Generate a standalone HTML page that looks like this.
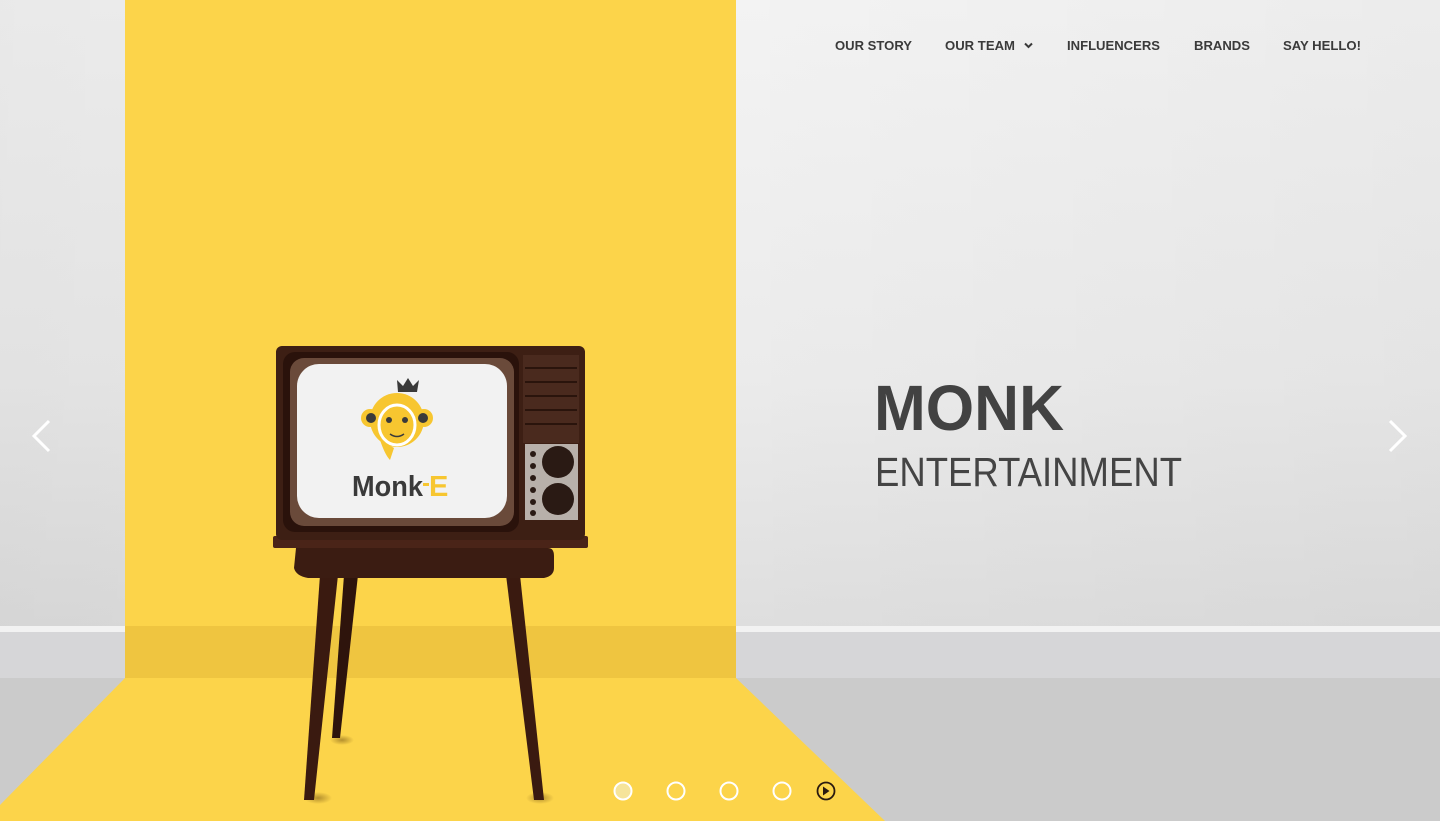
<!DOCTYPE html>
<html><head><meta charset="utf-8"><style>
html,body{margin:0;padding:0;width:1440px;height:821px;overflow:hidden;background:#eee}
svg{display:block}
</style></head><body>
<svg width="1440" height="821" viewBox="0 0 1440 821" xmlns="http://www.w3.org/2000/svg">
<defs>
<linearGradient id="wall" x1="0" y1="0" x2="0" y2="1">
<stop offset="0" stop-color="#f3f3f3"/><stop offset="0.6" stop-color="#ebebeb"/><stop offset="1" stop-color="#dedede"/>
</linearGradient>
<linearGradient id="wallside" x1="0" y1="0" x2="1" y2="0">
<stop offset="0" stop-color="#000" stop-opacity="0.04"/><stop offset="0.5" stop-color="#000" stop-opacity="0"/><stop offset="1" stop-color="#000" stop-opacity="0.03"/>
</linearGradient>
<radialGradient id="shadow"><stop offset="0" stop-color="#6b4a10" stop-opacity="0.5"/><stop offset="1" stop-color="#6b4a10" stop-opacity="0"/></radialGradient>
</defs>
<rect width="1440" height="630" fill="url(#wall)"/>
<rect width="1440" height="630" fill="url(#wallside)"/>
<rect y="626" width="1440" height="6" fill="#f2f2f2"/>
<rect y="632" width="1440" height="46" fill="#d6d6d8"/>
<rect y="678" width="1440" height="143" fill="#cbcbcb"/>
<!-- yellow backdrop -->
<rect x="125" y="0" width="611" height="626" fill="#fcd44a"/>
<rect x="125" y="626" width="611" height="52" fill="#efc540"/>
<polygon points="125,678 736,678 885,821 0,821 0,805" fill="#fcd44a"/>
<!-- nav -->
<g font-family="Liberation Sans, sans-serif" font-weight="bold" font-size="12.5" fill="#3a3a3a">
<text x="835" y="50" textLength="77" lengthAdjust="spacingAndGlyphs">OUR STORY</text>
<text x="945" y="50" textLength="70" lengthAdjust="spacingAndGlyphs">OUR TEAM</text>
<path d="M1025 43.5 l3.5 3.5 l3.5 -3.5" stroke="#3a3a3a" stroke-width="2" fill="none"/>
<text x="1067" y="50" textLength="93" lengthAdjust="spacingAndGlyphs">INFLUENCERS</text>
<text x="1194" y="50" textLength="56" lengthAdjust="spacingAndGlyphs">BRANDS</text>
<text x="1283" y="50" textLength="78" lengthAdjust="spacingAndGlyphs">SAY HELLO!</text>
</g>
<!-- heading -->
<text x="874" y="430" font-family="Liberation Sans, sans-serif" font-weight="bold" font-size="64" fill="#424242" textLength="190" lengthAdjust="spacingAndGlyphs">MONK</text>
<text x="875" y="486" font-family="Liberation Sans, sans-serif" font-size="41" fill="#444" textLength="307" lengthAdjust="spacingAndGlyphs">ENTERTAINMENT</text>
<!-- arrows -->
<path d="M49 421 l-15 15 l15 15" stroke="#fff" stroke-width="3" fill="none"/>
<path d="M1390 421 l15 15 l-15 15" stroke="#fff" stroke-width="3" fill="none"/>
<!-- TV stand legs -->
<ellipse cx="318" cy="798" rx="14" ry="6" fill="url(#shadow)"/>
<ellipse cx="342" cy="740" rx="12" ry="5" fill="url(#shadow)"/>
<ellipse cx="540" cy="798" rx="14" ry="6" fill="url(#shadow)"/>
<polygon points="320,575 338,575 314,800 304,800" fill="#3a1a10"/>
<polygon points="344,575 358,575 340,738 332,738" fill="#2e140c"/>
<polygon points="506,575 520,575 544,800 534,800" fill="#3a1a10"/>
<path d="M296 548 h252 q6 0 6 8 v12 q0 8 -10 10 h-236 q-12 -2 -14 -10 z" fill="#3b1c12"/>
<rect x="273" y="536" width="315" height="12" rx="2" fill="#4a2418"/>
<!-- TV body -->
<rect x="276" y="346" width="309" height="194" rx="6" fill="#3d1f14"/>
<rect x="283" y="352" width="236" height="180" rx="12" fill="#2a120b"/>
<rect x="290" y="358" width="224" height="168" rx="14" fill="#6a4a3a"/>
<rect x="297" y="364" width="210" height="154" rx="22" fill="#f2f2f2"/>
<!-- right panel -->
<rect x="523" y="355" width="56" height="88" fill="#4a2a1e"/>
<g stroke="#2a140c" stroke-width="2"><line x1="525" y1="368" x2="577" y2="368"/><line x1="525" y1="382" x2="577" y2="382"/><line x1="525" y1="396" x2="577" y2="396"/><line x1="525" y1="410" x2="577" y2="410"/><line x1="525" y1="424" x2="577" y2="424"/></g>
<rect x="525" y="444" width="53" height="76" fill="#b8b0aa"/>
<circle cx="558" cy="462" r="16" fill="#2a1a14"/>
<circle cx="558" cy="499" r="16" fill="#2a1a14"/>
<g fill="#2a1a14"><circle cx="533" cy="454" r="3"/><circle cx="533" cy="466" r="3"/><circle cx="533" cy="478" r="3"/><circle cx="533" cy="490" r="3"/><circle cx="533" cy="502" r="3"/><circle cx="533" cy="513" r="3"/></g>
<!-- logo -->
<path d="M398 392 l-1 -12 l6 6 l5 -8 l5 8 l6 -6 l-2 12 z" fill="#3a3a3a"/>
<circle cx="397" cy="420" r="27" fill="#f7c630"/>
<path d="M380 440 q5 15 10 20 l4 -12 z" fill="#f7c630"/>
<circle cx="370" cy="418" r="9" fill="#f7c630"/>
<circle cx="424" cy="418" r="9" fill="#f7c630"/>
<circle cx="371" cy="418" r="5" fill="#3a3a3a"/>
<circle cx="423" cy="418" r="5" fill="#3a3a3a"/>
<ellipse cx="397" cy="425" rx="18" ry="20" fill="none" stroke="#fff" stroke-width="3"/>
<circle cx="389" cy="420" r="3" fill="#3a3a3a"/>
<circle cx="405" cy="420" r="3" fill="#3a3a3a"/>
<path d="M390 434 q7 5 14 0" stroke="#3a3a3a" stroke-width="1.5" fill="none"/>
<text x="352" y="496" font-family="Liberation Sans, sans-serif" font-weight="bold" font-size="29" fill="#3a3a3a" textLength="71" lengthAdjust="spacingAndGlyphs">Monk</text>
<rect x="423" y="483" width="6" height="3" fill="#f7c630"/>
<text x="429" y="496" font-family="Liberation Sans, sans-serif" font-weight="bold" font-size="29" fill="#f7c630">E</text>
<!-- dots -->
<circle cx="623" cy="791" r="8.5" fill="#f6e49a" stroke="#fff" stroke-width="2"/>
<circle cx="676" cy="791" r="8.5" fill="none" stroke="#fff" stroke-width="2"/>
<circle cx="729" cy="791" r="8.5" fill="none" stroke="#fff" stroke-width="2"/>
<circle cx="782" cy="791" r="8.5" fill="none" stroke="#fff" stroke-width="2"/>
<circle cx="826" cy="791" r="8.5" fill="none" stroke="#2a1a10" stroke-width="1.8"/>
<path d="M823 786.5 l6.5 4.5 l-6.5 4.5 z" fill="#2a1a10"/>
</svg>
</body></html>
